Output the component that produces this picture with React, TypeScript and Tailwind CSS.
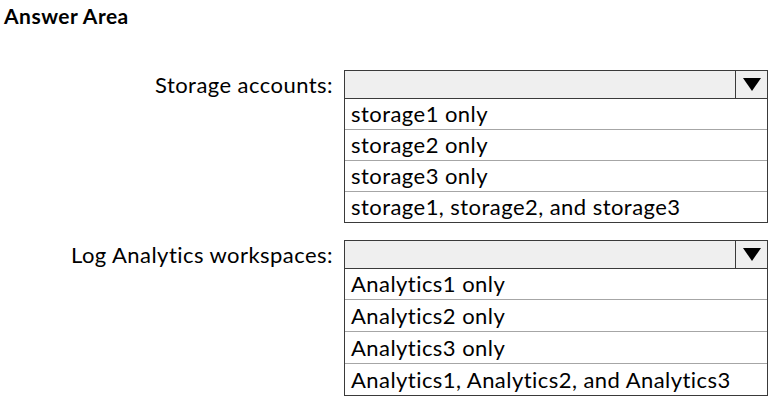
const groups = [
  {
    label: 'Storage accounts:',
    options: ['storage1 only', 'storage2 only', 'storage3 only', 'storage1, storage2, and storage3'],
    tall: false,
  },
  {
    label: 'Log Analytics workspaces:',
    options: ['Analytics1 only', 'Analytics2 only', 'Analytics3 only', 'Analytics1, Analytics2, and Analytics3'],
    tall: true,
  },
]

function Dropdown({ options, tall }: { options: string[]; tall: boolean }) {
  return (
    <div className="w-[424px] border border-[#3a3a3a] bg-white">
      <div className="flex h-[28px] border-b border-[#3a3a3a] bg-[#efefef]">
        <div className="flex-1" />
        <div className="flex w-[32px] items-center justify-center border-l border-[#3a3a3a]">
          <svg width="18" height="13" viewBox="0 0 18 13">
            <polygon points="0,0 18,0 9,13" fill="#000" />
          </svg>
        </div>
      </div>
      {options.map((opt, i) => (
        <div
          key={opt}
          className={
            'flex items-center px-[6px] text-[22px] leading-none tracking-[0.45px] ' +
            (i === 0 ? 'h-[30px]' : tall ? 'h-[32px] border-t border-[#a6a6a6]' : 'h-[31px] border-t border-[#a6a6a6]')
          }
        >
          {opt}
        </div>
      ))}
    </div>
  )
}

export default function App() {
  return (
    <div className="h-[406px] w-[774px] bg-white font-['Lato',sans-serif] text-black [font-variant-ligatures:none]">
      <div className="pl-[4px] pt-[4px] text-[21px] font-bold leading-[24px] tracking-[0.5px]">Answer Area</div>

      <div className="mt-[42px] flex flex-col gap-[17px]">
        {groups.map((g) => (
          <div key={g.label} className="flex items-start">
            <div className="flex h-[30px] w-[333px] items-center justify-end text-[22px] leading-none tracking-[0.45px]">
              {g.label}
            </div>
            <div className="ml-[11px]">
              <Dropdown options={g.options} tall={g.tall} />
            </div>
          </div>
        ))}
      </div>
    </div>
  )
}
